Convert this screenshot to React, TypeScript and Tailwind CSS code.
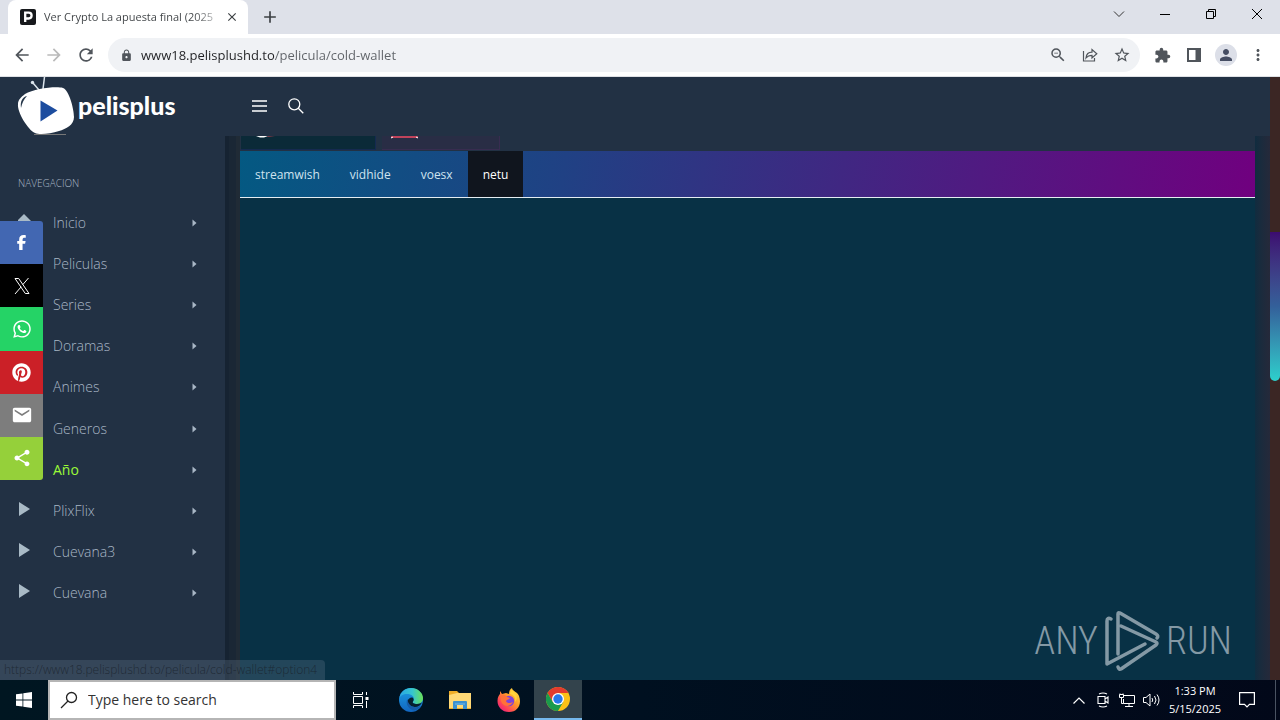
import type { ReactNode } from 'react';
import {
  MdAdd, MdArrowBack, MdArrowForward, MdClose, MdEmail, MdExtension, MdLock, MdMoreVert,
  MdPerson, MdRefresh, MdShare, MdStarBorder, MdZoomOut,
} from 'react-icons/md';
import { FaFacebookF, FaPinterest, FaWhatsapp } from 'react-icons/fa6';

const navItems = ['Inicio', 'Peliculas', 'Series', 'Doramas', 'Animes', 'Generos', 'Año', 'PlixFlix', 'Cuevana3', 'Cuevana'];
const servers = ['streamwish', 'vidhide', 'voesx', 'netu'];

function XLogo() {
  return (
    <svg viewBox="0 0 16 16" className="size-4" fill="none" stroke="currentColor">
      <path d="M1 .5h3.700L15 15.500h-3.700zM14.500 0L8.800 6.600M1 16l6.200-7.200" />
    </svg>
  );
}

const shares: { label: string; color: string; icon: ReactNode }[] = [
  { label: 'Facebook', color: 'bg-[#4267b2] rounded-tr-[3px]', icon: <FaFacebookF size={15} /> },
  { label: 'X', color: 'bg-black', icon: <XLogo /> },
  { label: 'WhatsApp', color: 'bg-[#25d366]', icon: <FaWhatsapp size={20} /> },
  { label: 'Pinterest', color: 'bg-[#cb2027]', icon: <FaPinterest size={19} /> },
  { label: 'Email', color: 'bg-[#7d7d7d]', icon: <MdEmail size={22} /> },
  { label: 'Compartir', color: 'bg-[#95d03a] rounded-br-[3px]', icon: <MdShare size={20} /> },
];

function IconButton({ label, className = '', children }: { label: string; className?: string; children: ReactNode }) {
  return (
    <button aria-label={label} className={`flex shrink-0 items-center justify-center ${className}`}>
      {children}
    </button>
  );
}

function TabStrip() {
  return (
    <div className="flex h-[34px] shrink-0 bg-[#dee1e9] pl-2 text-[#3c4043]">
      <div className="flex w-60 items-center rounded-t-lg bg-white pl-3 pr-1">
        <svg viewBox="0 0 16 16" className="size-4 shrink-0">
          <rect width="16" height="16" rx="2" fill="#17191c" />
          <path d="M5.2 13V3.7h3.5a2.9 2.9 0 0 1 0 5.8H5.2" fill="none" stroke="#fff" strokeWidth="2.3" />
        </svg>
        <span className="ml-2 flex-1 whitespace-nowrap bg-linear-to-r from-[#3c4043] from-85% to-[#3c4043]/20 bg-clip-text text-[11px] text-transparent">
          Ver Crypto La apuesta final (2025
        </span>
        <IconButton label="Close tab" className="size-6"><MdClose size={14} /></IconButton>
      </div>
      <IconButton label="New tab" className="ml-2 w-7"><MdAdd size={20} /></IconButton>
      <div className="ml-auto flex text-black">
        <IconButton label="Search tabs" className="h-7 w-[46px]">
          <svg viewBox="0 0 12 12" className="size-3" fill="none" stroke="#333"><path d="M1 3.5l5 5 5-5" /></svg>
        </IconButton>
        <IconButton label="Minimize" className="h-7 w-[46px]">
          <svg viewBox="0 0 10 10" className="size-2.5" stroke="currentColor"><path d="M0 5.5h10" /></svg>
        </IconButton>
        <IconButton label="Restore" className="h-7 w-[46px]">
          <svg viewBox="0 0 10 10" className="size-2.5" fill="none" stroke="currentColor"><path d="M.5 2.5h7v7h-7zM2.5 2.5v-2h7v7h-2" /></svg>
        </IconButton>
        <IconButton label="Close" className="h-7 w-[46px]">
          <svg viewBox="0 0 10 10" className="size-2.5" fill="none" stroke="currentColor"><path d="M0 0l10 10M10 0L0 10" /></svg>
        </IconButton>
      </div>
    </div>
  );
}

function Toolbar() {
  return (
    <div className="flex h-[43px] shrink-0 items-center border-b border-[#dfe1e5] bg-white pl-1.5 pr-1.5 text-[#50555b]">
      <IconButton label="Back" className="size-8"><MdArrowBack size={20} /></IconButton>
      <IconButton label="Forward" className="size-8 text-[#bababa]"><MdArrowForward size={20} /></IconButton>
      <IconButton label="Reload" className="size-8"><MdRefresh size={20} /></IconButton>
      <div className="ml-1.5 flex h-[34px] flex-1 items-center rounded-full bg-[#f0f2f5] pl-3 pr-0.5">
        <MdLock size={13} />
        <input
          aria-label="Address"
          defaultValue="www18.pelisplushd.to/pelicula/cold-wallet"
          className="ml-2 h-7 min-w-0 flex-1 bg-linear-to-r from-[#202124] from-[134px] to-[#5f6368] to-[134px] bg-clip-text text-[13px] text-transparent outline-none"
        />
        <IconButton label="Zoom" className="size-8"><MdZoomOut size={18} /></IconButton>
        <IconButton label="Share" className="size-8">
          <svg viewBox="0 0 16 16" className="size-4" fill="none" stroke="currentColor" strokeWidth="1.2">
            <path d="M1.500 4v10h11v-3M4 11c.4-4 3-5.8 6-5.8V2.500l4.800 4.200L10 11V8.300C7.600 8.300 5.600 9 4 11z" />
          </svg>
        </IconButton>
        <IconButton label="Bookmark" className="size-8"><MdStarBorder size={18} /></IconButton>
      </div>
      <IconButton label="Extensions" className="ml-1.5 size-8"><MdExtension size={17} /></IconButton>
      <IconButton label="Side panel" className="size-8">
        <svg viewBox="0 0 14 14" className="size-3.5"><path d="M1 1h12v12H1z" fill="none" stroke="currentColor" strokeWidth="2" /><path d="M8.500 1H13v12H8.500z" fill="currentColor" /></svg>
      </IconButton>
      <IconButton label="Profile" className="size-8">
        <span className="flex size-[22px] items-center justify-center rounded-full bg-[#dcdfe8] text-[#454d63]"><MdPerson size={18} /></span>
      </IconButton>
      <IconButton label="Menu" className="size-8"><MdMoreVert size={18} /></IconButton>
    </div>
  );
}

function SiteHeader() {
  return (
    <header className="flex h-[59px] shrink-0 items-start bg-[#223144] pl-4 text-white">
      <a href="#inicio" className="flex w-[228px] items-center">
        <svg viewBox="0 0 60 59" className="h-[59px] w-[60px] shrink-0">
          <path d="M23 13L17 6M27 12L28.500 0" stroke="#dce5ed" strokeWidth="1.500" fill="none" />
          <circle cx="16.500" cy="5.500" r="1.700" fill="#dce5ed" />
          <path d="M18 57.500h32" stroke="#777" />
          <path d="M9 17C18 12 39 9 47 11c6 2 11 21 11 29 0 8-8 12-15 14-9 3-20 4-24 2C12 53 1 35 2 27c0-4 3-7 7-10z" fill="#fff" />
          <path d="M5 31c-1-6 1-11 6-12-3 3-5 7-6 12z" fill="#26374a" />
          <path d="M24.500 23.500v21l17-11z" fill="#1d4d9f" />
        </svg>
        <span className="ml-0.5 pb-0.5 font-['Lato'] text-[25px] font-black leading-none">pelisplus</span>
      </a>
      <IconButton label="Menu" className="mt-3.5 size-[30px]">
        <svg viewBox="0 0 15 12" className="h-3 w-[15px]" stroke="currentColor" strokeWidth="1.700"><path d="M0 1h15M0 6h15M0 11h15" /></svg>
      </IconButton>
      <IconButton label="Buscar" className="ml-[7px] mt-3.5 size-[30px]">
        <svg viewBox="0 0 16 16" className="size-4" fill="none" stroke="currentColor" strokeWidth="1.300"><circle cx="6.300" cy="6.300" r="5.500" /><path d="M10.300 10.300l5 5" /></svg>
      </IconButton>
    </header>
  );
}

function Sidebar() {
  return (
    <nav className="w-[225px] shrink-0 bg-[#223144] text-[#a9b7c6]">
      <h2 className="px-[18px] pt-[39px] text-[10px] font-light leading-4">NAVEGACION</h2>
      <ul className="mt-[11px] flex h-[412px] flex-col">
        {navItems.map((item, i) => (
          <li key={item} className="flex-1">
            <a href="#nav" className="flex h-full items-center pl-[18px] pr-7 text-sm font-light">
              <svg viewBox="0 0 14 14" className="mb-1 size-3.5" fill="#a9bac6">
                {i === 0 ? <path d="M6 0l7 7v2H-1V7z" /> : i > 6 ? <path d="M1 0l11 7-11 7z" /> : null}
              </svg>
              <span className={`ml-[21px] flex-1 ${item === 'Año' ? 'font-normal text-[#9afa38]' : ''}`}>{item}</span>
              <svg viewBox="0 0 5 8" className="h-2 w-[5px]" fill="#a9b7c6"><path d="M.5 .5l4 3.500-4 3.500z" /></svg>
            </a>
          </li>
        ))}
      </ul>
    </nav>
  );
}

function Player() {
  return (
    <main className="flex min-w-0 flex-1 flex-col bg-[#083145]">
      <div className="flex h-[15px] shrink-0 items-start gap-1.5 bg-[#223144] pl-px">
        <div className="h-3.5 w-[135px] shrink-0 border-b border-r border-[#152a50] bg-[#0b2a38] pl-3.5">
          <svg viewBox="0 0 20 3" className="h-[3px] w-5"><path d="M1 0h12l-4 1.500H5z" fill="#fff" /><path d="M13 0h7l-8 1z" fill="#9d3c4b" /></svg>
        </div>
        <div className="h-3.5 w-[118px] shrink-0 border-b border-r border-[#382c50] bg-[#292d45] pl-2">
          <svg viewBox="0 0 29 3" className="h-[3px] w-[29px]"><path d="M1 0h27v2H1z" fill="#c0435b" /><path d="M1 2l2-1M26 1l2 1" stroke="#fff" /></svg>
        </div>
      </div>
      <div role="tablist" className="flex h-[47px] shrink-0 border-b border-[#e5edf2] bg-linear-[100deg,#045982,#204184_32%,#70007f]">
        {servers.map((s) => (
          <button
            key={s}
            role="tab"
            aria-selected={s === 'netu'}
            className={`px-[15px] pt-0.5 text-xs ${s === 'netu' ? 'bg-[#10151e] text-white' : 'text-[#cfe3ef]'}`}
          >
            {s}
          </button>
        ))}
      </div>
      <div className="flex-1" />
    </main>
  );
}

function ShareBar() {
  return (
    <div className="absolute left-0 top-36 flex h-[259px] w-[43px] flex-col text-white">
      {shares.map((s) => (
        <button key={s.label} aria-label={s.label} className={`flex flex-1 items-center justify-center ${s.color}`}>{s.icon}</button>
      ))}
    </div>
  );
}

function Watermark() {
  return (
    <div className="absolute bottom-2 right-12 flex items-center gap-1.5 font-['Roboto_Condensed','Open_Sans',sans-serif] text-[38px] font-light leading-none text-[#8499a5]">
      <span>ANY</span>
      <svg viewBox="0 0 56 62" className="h-[62px] w-14" fill="none" stroke="#8499a5" strokeWidth="3.500" strokeLinejoin="round" strokeLinecap="round">
        <path d="M14 44V4q0-2 2-1l36 21q3 2 1 4M17 16l35 16q2 1 0 3L17 59q-2 1-3-2" />
        <path d="M7 9Q3 7 3 11v43l38-20" />
      </svg>
      <span>RUN</span>
    </div>
  );
}

function EdgeLogo() {
  return (
    <svg viewBox="0 0 24 24" className="size-6">
      <defs>
        <linearGradient id="edgeTop" x1="0" x2="1"><stop stopColor="#28a6e5" /><stop offset=".55" stopColor="#36c5cf" /><stop offset="1" stopColor="#6be257" /></linearGradient>
        <linearGradient id="edgeLow" x1="0" y1="0" x2="0" y2="1"><stop stopColor="#1b9de2" /><stop offset="1" stopColor="#1266c0" /></linearGradient>
      </defs>
      <circle cx="12" cy="12" r="12" fill="url(#edgeLow)" />
      <path d="M.2 10.500C1.500 4 6 0 12 0c7 0 12 5 12 10 0 4-3 6-6 6-3 0-5-1-4-2.500 3-5-2-7.500-6-7.500-4 0-7 2-7.800 4.500z" fill="url(#edgeTop)" />
      <path d="M8.500 12.500c1-2 3-3.500 5-3 1.500 1 1.500 3 .5 4-1 1.500 1 2.500 4 2.500 2 0 4-.8 5-1.700-1 3-4 4.700-7 4.700-4.500 0-8-3-7.500-6.500z" fill="#06202f" />
      <path d="M8.500 11C6 15 9 21 15 22.500c3-.5 5-2 7-4.500-7 3-13 0-13.500-7z" fill="#155ca9" />
    </svg>
  );
}

function FirefoxLogo() {
  return (
    <svg viewBox="0 0 24 24" className="size-6">
      <defs>
        <linearGradient id="foxBody" x1="1" y1="0" x2=".1" y2="1"><stop stopColor="#fff04a" /><stop offset=".45" stopColor="#ff9a28" /><stop offset=".75" stopColor="#ff4655" /><stop offset="1" stopColor="#e31587" /></linearGradient>
      </defs>
      <path d="M3 3l2 3 4-1 3 1c0-3 1-5 3-6 0 3 6 4 7 8 3 8-1 16-10 16C5 24 .500 19 .500 13 .500 9 2 7 3 6z" fill="url(#foxBody)" />
      <circle cx="12" cy="13" r="5.200" fill="#7e43d9" />
      <path d="M4 8c3-2 5-1 6 1l3 1c-1 2-3 1-4 3 1 3 5 2 7 1-2 4-6 5-9 3-3-2-4-5-3-9z" fill="#ff7139" />
      <path d="M13 6c4 1 6 4 5 8 4-4 1-10-4-12z" fill="#ffd43b" />
    </svg>
  );
}

function ChromeLogo() {
  return (
    <svg viewBox="0 0 24 24" className="size-6">
      <circle cx="12" cy="12" r="12" fill="#fbc116" />
      <path d="M12 12L6.800 15 1.600 6A12 12 0 0 1 22.400 6H12z" fill="#e33b2e" />
      <path d="M1.600 6A12 12 0 0 0 12 24l5.200-9L12 12l-5.200 3z" fill="#1a9b4c" />
      <circle cx="12" cy="12" r="6" fill="#fff" />
      <circle cx="12" cy="12" r="4.700" fill="#2878ea" />
    </svg>
  );
}

function Taskbar() {
  return (
    <footer className="flex h-10 shrink-0 bg-linear-to-r from-[#001621] via-[#001020] to-[#020819] text-white">
      <IconButton label="Start" className="w-12">
        <svg viewBox="0 0 16 16" className="size-4" fill="#fff"><path d="M0 2.300L6.500 1.400v6.200H0zM7.300 1.300L16 0v7.600H7.300zM0 8.400h6.500v6.200L0 13.700zM7.300 8.400H16V16l-8.700-1.300z" /></svg>
      </IconButton>
      <label className="flex w-72 items-center border-2 border-[#b5b5b5] bg-white pl-2.5 text-black">
        <svg viewBox="0 0 18 18" className="size-[18px]" fill="none" stroke="#222" strokeWidth="1.300"><circle cx="11.500" cy="6.500" r="5" /><path d="M8 10l-7 7" /></svg>
        <input aria-label="Search" placeholder="Type here to search" className="ml-2.5 min-w-0 flex-1 text-sm outline-none placeholder:text-[#333]" />
      </label>
      <IconButton label="Task view" className="w-12">
        <svg viewBox="0 0 17 16" className="h-4 w-[17px]" fill="none" stroke="#fff"><path d="M1.500 0v2.500h9V0M1.500 16v-2.500h9V16M1.500 4.500h9v7h-9zM14.500 0v3M14.500 9v7" /><path d="M13.500 5h3v3h-3z" fill="#fff" stroke="none" /></svg>
      </IconButton>
      <div className="ml-[3px] flex gap-px">
        <IconButton label="Edge" className="w-12"><EdgeLogo /></IconButton>
        <IconButton label="File Explorer" className="w-12">
          <svg viewBox="0 0 22 20" className="h-5 w-[22px]"><path d="M0 1h8l2 2h12v16H0z" fill="#efad27" /><path d="M0 5l8-2h14v15H0z" fill="#ffd976" /><path d="M4 19v-7q0-1 1-1h12q1 0 1 1v7h-4v-4H8v4z" fill="#3c91cf" /><path d="M6 14h10" stroke="#75b9e6" /></svg>
        </IconButton>
        <IconButton label="Firefox" className="w-12"><FirefoxLogo /></IconButton>
        <IconButton label="Chrome" className="w-12 border-b-2 border-[#76b9ed] bg-[#33434c]"><ChromeLogo /></IconButton>
      </div>
      <div className="ml-auto flex items-center">
        <IconButton label="Show hidden icons" className="w-6">
          <svg viewBox="0 0 12 7" className="h-[7px] w-3" fill="none" stroke="#fff" strokeWidth="1.200"><path d="M.5 6.500L6 1l5.500 5.500" /></svg>
        </IconButton>
        <IconButton label="Meet now" className="w-6">
          <svg viewBox="0 0 12 16" className="h-4 w-3" fill="none" stroke="#fff" strokeWidth="1.100"><path d="M2 2q4-2 8 0M2 14q4 2 8 0M1 4.500h7v7H1zM8 7l3-2v6L8 9" /></svg>
        </IconButton>
        <IconButton label="Network" className="w-6">
          <svg viewBox="0 0 16 14" className="h-3.5 w-4" fill="none" stroke="#fff"><path d="M5 2.500h10.500v8H4.500V6M10 11v2.500M6 13.500h8M.5 1.500h4v3h-4zM2.500 4.500v6h2M1 .500v1M4 .500v1" /></svg>
        </IconButton>
        <IconButton label="Volume" className="w-6">
          <svg viewBox="0 0 17 14" className="h-3.5 w-[17px]" fill="none" stroke="#fff"><path d="M.5 4.500H3l4-3.500v12L3 9.500H.5zM9 5q1.500 2 0 4M11.500 3q3 4 0 8M14 1.500q4 5.500 0 11" /></svg>
        </IconButton>
        <button className="ml-1 w-14 whitespace-nowrap text-center text-[11px] leading-[18px]">1:33 PM<br />5/15/2025</button>
        <IconButton label="Notifications" className="mr-1 w-12">
          <svg viewBox="0 0 16 16" className="size-4" fill="none" stroke="#fff" strokeWidth="1.200"><path d="M.600.600h14.800v11.800H10.500L8 15l-2.500-2.600H.600z" /></svg>
        </IconButton>
        <span className="h-10 w-[5px] border-l border-[#4a5362]" />
      </div>
    </footer>
  );
}

export default function App() {
  return (
    <div className="flex h-screen flex-col overflow-hidden font-['Open_Sans','Noto_Sans',sans-serif]">
      <TabStrip />
      <Toolbar />
      <div className="relative flex min-h-0 flex-1">
        <div className="flex min-w-0 flex-1 flex-col bg-[#1b2938]">
          <SiteHeader />
          <div className="flex min-h-0 flex-1 overflow-hidden">
            <Sidebar />
            <div className="w-[15px] shrink-0 border-x-4 border-l-[#162332] border-r-[#202b36] bg-[#1a2735]" />
            <Player />
            <div className="w-[15px] shrink-0 bg-linear-to-r from-[#102c3f] to-[#25293a]" />
          </div>
        </div>
        <div className="w-2.5 shrink-0 bg-[#3b2624] pt-[155px]">
          <div className="h-[149px] rounded-b-[5px] bg-linear-to-b from-[#3c0b70] via-[#33609a] to-[#2cd0cc]" />
        </div>
        <ShareBar />
        <Watermark />
        <div className="absolute bottom-0 left-0 h-5 w-[325px] whitespace-nowrap rounded-tr bg-[#64788a]/30 pl-1 text-xs font-light leading-5 text-[#19222c]/80">
          https://www18.pelisplushd.to/pelicula/cold-wallet#option4
        </div>
      </div>
      <Taskbar />
    </div>
  );
}
